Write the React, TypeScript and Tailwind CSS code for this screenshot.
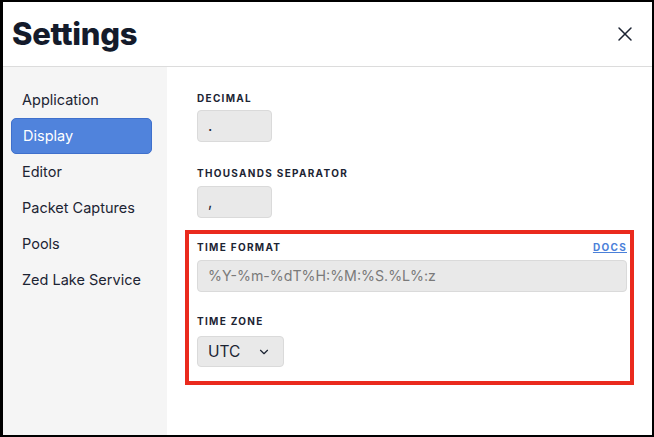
import React from "react";
import { X, ChevronDown } from "lucide-react";

const navItems = ["Application", "Display", "Editor", "Packet Captures", "Pools", "Zed Lake Service"];

const Label = ({ text }: { text: string }) => (
    <div className="h-[14px] text-[10px] leading-[14px] font-bold tracking-[0.13em] text-[#1c2433]">{text}</div>
);

const Field = ({ value, className = "" }: { value: string; className?: string }) => (
    <div className={`h-[32px] flex items-center pl-[10px] bg-[#e9e9e9] border border-[#dadada] rounded-[4px] ${className}`}>
        {value}
    </div>
);

const App = () => {
    return (
        <div
            className="w-[654px] h-[437px] flex flex-col bg-white border-2 border-l-[3px] border-black overflow-hidden"
            style={{ fontFamily: "Inter, 'Liberation Sans', sans-serif" }}
        >
            {/* HEADER */}
            <div className="h-[65px] shrink-0 flex items-center justify-between pl-[9px] pr-[15px] border-b border-[#dcdcdc]">
                <h1 className="text-[31px] font-extrabold text-[#141b2b] tracking-[-0.01em]">Settings</h1>
                <X size={24} strokeWidth={1.5} className="text-[#1c2433]" />
            </div>

            <div className="flex flex-1">
                {/* SIDEBAR */}
                <div className="w-[164px] bg-[#f5f5f5] pt-[15px] pl-[8px] pr-[15px]">
                    {navItems.map((item) => (
                        <div
                            key={item}
                            className={
                                item === "Display"
                                    ? "h-[36px] flex items-center pl-[11px] rounded-[5px] bg-[#5083dc] border border-[#3f70cc] text-white text-[14.5px]"
                                    : "h-[36px] flex items-center pl-[11px] text-[14.5px] text-[#1c2433]"
                            }
                        >
                            {item}
                        </div>
                    ))}
                </div>

                {/* CONTENT */}
                <div className="flex-1 pt-[24px] pl-[30px] pr-[25px]">
                    <Label text="DECIMAL" />
                    <Field value="." className="w-[75px] mt-[5px] text-[15px] text-[#1c2433]" />

                    <div className="mt-[24px]">
                        <Label text="THOUSANDS SEPARATOR" />
                        <Field value="," className="w-[75px] mt-[6px] text-[15px] text-[#1c2433]" />
                    </div>

                    {/* HIGHLIGHTED: TIME FORMAT + TIME ZONE */}
                    <div className="mt-[12px] -ml-[12px] -mr-[7px] border-4 border-[#ea2a1d] pt-[6px] pl-[8px] pr-[3px] pb-[14px]">
                        <div className="flex justify-between">
                            <Label text="TIME FORMAT" />
                            <a className="h-[14px] text-[10px] leading-[14px] font-bold tracking-[0.13em] text-[#4b80d9] underline">
                                DOCS
                            </a>
                        </div>
                        <Field value="%Y-%m-%dT%H:%M:%S.%L%:z" className="mt-[6px] text-[14.2px] text-[#7a7a7a]" />

                        <div className="mt-[22px]">
                            <Label text="TIME ZONE" />
                            <div className="mt-[8px] w-[87px] h-[31px] flex items-center justify-between pl-[10px] pr-[12px] bg-[#e9e9e9] border border-[#dadada] rounded-[4px] text-[15.5px] text-[#1c2433]">
                                UTC
                                <ChevronDown size={14} strokeWidth={2} />
                            </div>
                        </div>
                    </div>
                </div>
            </div>
        </div>
    );
};

export default App;
